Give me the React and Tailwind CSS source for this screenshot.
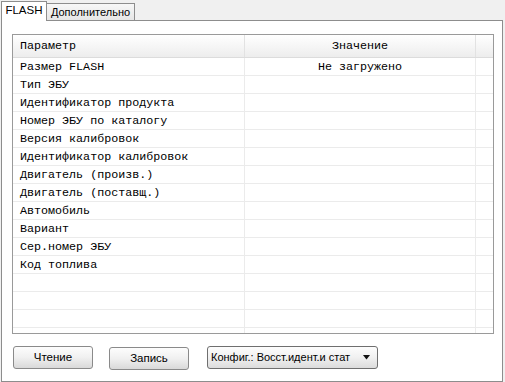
const rows = [
  ['Размер FLASH', 'Не загружено'],
  ['Тип ЭБУ', ''],
  ['Идентификатор продукта', ''],
  ['Номер ЭБУ по каталогу', ''],
  ['Версия калибровок', ''],
  ['Идентификатор калибровок', ''],
  ['Двигатель (произв.)', ''],
  ['Двигатель (поставщ.)', ''],
  ['Автомобиль', ''],
  ['Вариант', ''],
  ['Сер.номер ЭБУ', ''],
  ['Код топлива', ''],
  ['', ''],
  ['', ''],
  ['', ''],
  ['', ''],
];

const mono = { fontFamily: '"Liberation Mono", "Courier New", monospace' };

function Button({ children }) {
  return (
    <button className="w-[80px] h-[23px] rounded-[3px] border border-[#8a8a8a] bg-gradient-to-b from-[#fdfdfd] via-[#f0f0f0] to-[#d9d9d9] text-[11.5px] text-black leading-none">
      {children}
    </button>
  );
}

export default function App() {
  return (
    <div
      className="w-[505px] h-[382px] bg-[#f0f0f0] overflow-hidden"
      style={{ fontFamily: '"Liberation Sans", Arial, sans-serif' }}
    >
      {/* tab strip */}
      <div className="flex items-end h-[21px] pl-[1px] relative z-10">
        <div className="h-[20px] w-[46px] border border-b-0 border-[#8d8d8d] bg-white flex items-center justify-center text-[11.5px] text-black pb-[1px]">
          FLASH
        </div>
        <div className="h-[17px] w-[88px] mb-[1px] border border-l-0 border-b-0 border-[#8d8d8d] bg-gradient-to-b from-[#f7f7f7] to-[#e6e6e6] flex items-center justify-center text-[11px] text-black">
          Дополнительно
        </div>
      </div>

      {/* panel */}
      <div className="ml-[1px] -mt-[1px] w-[502px] h-[362px] border border-[#8d8d8d] bg-white pt-[13px] pl-[10px]">
        <div className="w-[482px] h-[300px] border border-[#9a9a9a] overflow-hidden text-[11.7px] text-black" style={mono}>
          <div className="flex h-[23px] border-b border-[#dcdcdc] bg-gradient-to-b from-[#ffffff] to-[#ededed]">
            <div className="w-[232px] border-r border-[#e2e2e2] flex items-center pl-[7px] pt-[2px]">Параметр</div>
            <div className="w-[231px] border-r border-[#e2e2e2] flex items-center justify-center pt-[2px]">Значение</div>
            <div className="flex-1" />
          </div>
          {rows.map(([p, v], i) => (
            <div key={i} className="flex h-[18px] border-b border-[#ebebeb]">
              <div className="w-[232px] border-r border-[#ebebeb] flex items-center pl-[7px] pt-[3px] whitespace-nowrap">{p}</div>
              <div className="w-[231px] border-r border-[#ebebeb] flex items-center justify-center pt-[3px] whitespace-nowrap">{v}</div>
              <div className="flex-1" />
            </div>
          ))}
        </div>

        <div className="flex items-center mt-[11px] pl-[1px]">
          <Button>Чтение</Button>
          <div className="ml-[16px]">
            <Button>Запись</Button>
          </div>
          <div className="ml-[18px] w-[171px] h-[23px] rounded-[3px] border border-[#6f6f6f] bg-gradient-to-b from-[#fdfdfd] via-[#f0f0f0] to-[#dcdcdc] flex items-center pl-[3px] pr-[6px] text-[11px] text-black">
            <span className="flex-1 whitespace-nowrap">Конфиг.: Восст.идент.и стат</span>
            <svg width="8" height="5" viewBox="0 0 8 5" className="ml-[4px] shrink-0">
              <path d="M0 0H7L3.5 4.5Z" fill="#111" />
            </svg>
          </div>
        </div>
      </div>
    </div>
  );
}
